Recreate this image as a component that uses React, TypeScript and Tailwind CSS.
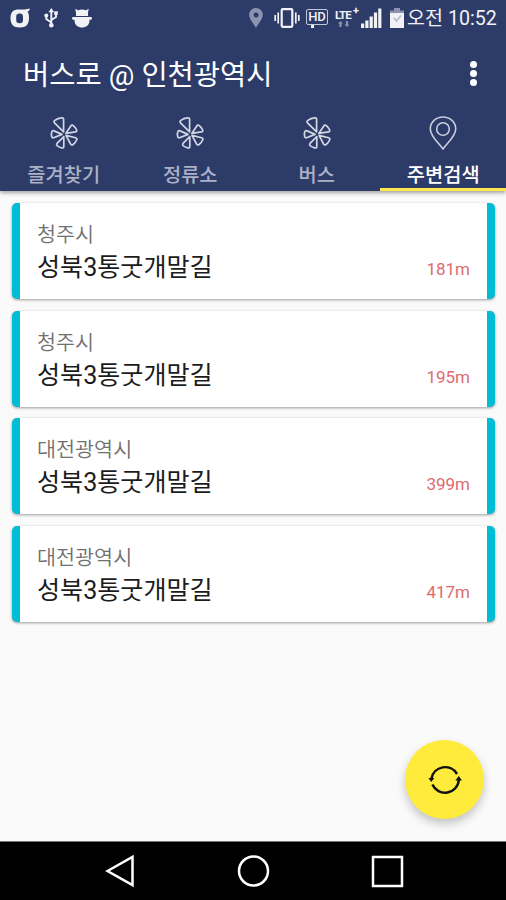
import type { ReactNode } from "react";
import clsx from "clsx";

interface Stop {
  id: number;
  city: string;
  name: string;
  distance: string;
}

interface Tab {
  label: string;
  icon: ReactNode;
}

const stops: Stop[] = [
  { id: 1, city: "청주시", name: "성북3통굿개말길", distance: "181m" },
  { id: 2, city: "청주시", name: "성북3통굿개말길", distance: "195m" },
  { id: 3, city: "대전광역시", name: "성북3통굿개말길", distance: "399m" },
  { id: 4, city: "대전광역시", name: "성북3통굿개말길", distance: "417m" },
];

function FanIcon() {
  return (
    <svg width="30" height="36" viewBox="0 0 30 36" fill="none" stroke="currentColor" strokeWidth="1.7" strokeLinejoin="round">
      <path d="M14.6 16.8V4.2C14.6 3 13.6 2.6 12.4 2.9C9.6 3.2 7.6 4.2 5.8 5.4C4.8 6 4.9 7 5.5 7.8Z" />
      <path d="M13 19.4L4.6 22.7C3.6 23 2.7 22.4 2.6 21.2C2.3 19.6 2.3 18 2.8 16.8C3.2 15.6 4 15.5 5 15.9Z" />
      <path d="M14.8 21.6V31.6C14.8 32.8 14 33.2 12.8 32.9C11 32.5 9.6 31.8 8.3 30.9C7.4 30.2 7.4 29.3 8 28.4Z" />
      <path d="M17 20.4L26.6 22.8C27.8 23.1 28.2 23.8 27.6 25C26.8 26.9 25.5 28.5 24.1 29.5C23.2 30.1 22.3 29.9 21.6 29Z" />
      <path d="M16.8 18.4L21.8 11C22.5 10 23.5 10 24.3 10.6C25.8 11.8 27 13.2 27.7 15C28 16 27.4 16.7 26.4 16.9Z" />
    </svg>
  );
}

function PlaceIcon() {
  return (
    <svg width="30" height="36" viewBox="0 0 30 36" fill="none" stroke="currentColor" strokeWidth="1.6" strokeLinejoin="round">
      <path d="M15 34C11.5 28.5 2.3 21.5 2.3 13.9C2.3 7.2 8 2 15 2S27.7 7.2 27.7 13.9C27.7 21.5 18.5 28.5 15 34Z" />
      <circle cx="15" cy="14" r="6.3" />
    </svg>
  );
}

const tabs: Tab[] = [
  { label: "즐겨찾기", icon: <FanIcon /> },
  { label: "정류소", icon: <FanIcon /> },
  { label: "버스", icon: <FanIcon /> },
  { label: "주변검색", icon: <PlaceIcon /> },
];

function StatusBar() {
  return (
    <div className="flex h-[35px] items-center justify-between pl-2.5 pr-[9px] text-[#f1f2f6]">
      <div className="flex items-center">
        <svg width="21" height="20" viewBox="0 0 21 20">
          <path d="M20 .5C19.6 2.2 18.8 3.2 17.5 3.7C18.6 5.1 19 6.8 19 9.5C19 16.5 16.2 19.5 9.8 19.5C3.3 19.5 .5 16.5 .5 10C.5 4 3.2 1.5 9 1.5C13 1.5 16.5 1.5 20 .5Z" fill="currentColor" />
          <rect x="6.200" y="5.5" width="6.800" height="9.800" rx="3.2" fill="#2d3b69" />
        </svg>
        <svg className="ml-[13px]" width="14" height="20" viewBox="0 0 14 20" fill="none" stroke="currentColor" strokeWidth="1.9">
          <path d="M7.3 3V16M7.3 14.5L2.3 11V8M7.3 12L12 9V5" />
          <path d="M7.3 0L10.2 4.2H4.4Z" fill="currentColor" stroke="none" />
          <circle cx="2.3" cy="7.5" r="2" fill="currentColor" stroke="none" />
          <rect x="10.2" y="3.3" width="3.6" height="3.6" fill="currentColor" stroke="none" />
          <circle cx="7.3" cy="17.3" r="2.3" fill="currentColor" stroke="none" />
        </svg>
        <svg className="ml-[14px]" width="20" height="20" viewBox="0 0 20 20" fill="currentColor">
          <path d="M4 8V4.5L3.2 .8L6 2.2Q10 .9 14 2.2L16.8 .8L16 4.5V8Z" />
          <rect x="0" y="9" width="20" height="2.8" rx="1.4" />
          <path d="M2.5 10H17.5V12.5C17.5 17 14 19.5 10 19.5S2.5 17 2.5 12.5Z" />
        </svg>
      </div>

      <div className="flex items-center">
        <svg width="14" height="20" viewBox="0 0 14 20" fill="#8b93b0">
          <path fillRule="evenodd" d="M7 0C3 0 .2 3 .2 6.8C.2 11.5 4.5 15 7 20C9.5 15 13.8 11.5 13.8 6.8C13.8 3 11 0 7 0ZM7 4.5A2.5 2.5 0 1 1 7 9.5A2.5 2.5 0 0 1 7 4.5Z" />
        </svg>
        <svg className="ml-[11px]" width="26" height="20" viewBox="0 0 26 20" fill="none" stroke="currentColor" strokeWidth="1.7">
          <rect x="7.7" y="1.2" width="10.6" height="17.6" rx="1" strokeWidth="2.2" />
          <path d="M4.2 4.5V15.5M1.2 7V13M21.8 4.5V15.5M24.8 7V13" />
        </svg>
        <div className="relative ml-[6px] mt-[-2px] flex h-[16px] w-[22px] items-center justify-center rounded-[2px] border-[1.5px] border-[#c3c8d7] font-[Roboto] text-[13px] font-medium leading-none">
          HD
          <span className="absolute -bottom-[4px] left-[4px] h-[3px] w-[3px] bg-current" />
        </div>
        <div className="relative ml-[7px] h-[20px] w-[25px] font-[Roboto] font-bold">
          <span className="absolute left-0 top-[2px] text-[11.5px] leading-[11px] tracking-[-0.9px]">LTE</span>
          <span className="absolute right-[1px] top-[-2px] text-[11px] leading-[10px]">+</span>
          <svg className="absolute left-[3px] top-[13px]" width="12" height="6" viewBox="0 0 12 6" fill="#8b93b0">
            <path d="M2.5 0L5 2.5H3.6V6H1.4V2.5H0ZM9 6L6.5 3.5H7.9V0H10.1V3.5H11.5Z" />
          </svg>
        </div>
        <svg className="ml-px" width="21" height="20" viewBox="0 0 21 20" fill="currentColor">
          <path d="M0 15.5H3.2V20H0ZM4.3 12.5H7.5V20H4.3ZM8.6 8.5H11.8V20H8.6ZM12.9 4.5H16.1V20H12.9ZM17.2 .5H20.4V20H17.2Z" />
        </svg>
        <svg className="ml-[8px]" width="14" height="20" viewBox="0 0 14 20">
          <path d="M4 0H10V2.5H14V5H0V2.5H4Z" fill="#8b93b0" />
          <path d="M0 5H14V20H0Z" fill="currentColor" />
          <path d="M4 10L6.5 13L11 7.5" fill="none" stroke="#b4b9cb" strokeWidth="1.5" />
        </svg>
        <span className="ml-[3px] w-[90px] whitespace-nowrap pt-[3px] text-[19.6px] leading-9">오전 10:52</span>
      </div>
    </div>
  );
}

function StopCard({ stop }: { stop: Stop }) {
  return (
    <li className="flex h-24 items-end justify-between rounded-[5px] border-x-8 border-[#00bcd4] bg-white px-[17px] shadow-[0_1px_3px_rgba(0,0,0,0.38)]">
      <div className="pb-[14px]">
        <p className="text-[20.7px] font-[350] leading-[31px] text-[#707070]">{stop.city}</p>
        <p className="text-[25.1px] leading-[34px] text-[#1c1c1c]">{stop.name}</p>
      </div>
      <span className="pb-[18px] text-[17px] leading-6 text-[#de6a6f]">{stop.distance}</span>
    </li>
  );
}

export default function App() {
  return (
    <div className="relative flex h-[900px] w-[506px] flex-col overflow-hidden bg-[#fafafa] font-['Roboto','Noto_Sans_CJK_KR',sans-serif]">
      <header className="h-[191px] shrink-0 bg-[#2d3b69] shadow-[0_2px_4px_rgba(0,0,0,0.35)]">
        <StatusBar />
        <div className="flex h-[77px] items-center justify-between pl-[23px] pr-[29px]">
          <h1 className="whitespace-nowrap pt-[5px] text-[28.5px] leading-none text-white">버스로 @ 인천광역시</h1>
          <button className="flex flex-col gap-[2px]" aria-label="menu">
            <span className="size-[7px] rounded-full bg-white" />
            <span className="size-[7px] rounded-full bg-white" />
            <span className="size-[7px] rounded-full bg-white" />
          </button>
        </div>
        <nav className="grid h-[79px] grid-cols-4">
          {tabs.map((tab, i) => (
            <button
              key={tab.label}
              className={clsx(
                "flex h-[79px] flex-col items-center border-b-[3px] pt-[3px]",
                i === 3 ? "border-[#ffe74c] text-white" : "border-transparent text-[#abb1c6]"
              )}
            >
              <span className={clsx("flex pl-px", i === 3 ? "text-[#c9cedd]" : "text-[#d3d7e3]")}>{tab.icon}</span>
              <span className="mt-[10px] whitespace-nowrap pl-px text-[19.8px] font-medium leading-[30px]">{tab.label}</span>
            </button>
          ))}
        </nav>
      </header>

      <main className="flex-1 pl-3 pr-[11px] pt-3">
        <ul className="flex flex-col gap-[11.6px]">
          {stops.map((stop) => (
            <StopCard key={stop.id} stop={stop} />
          ))}
        </ul>
      </main>

      <button
        className="absolute bottom-[81px] right-[22px] flex size-[79px] items-center justify-center rounded-full bg-[#ffeb3b] shadow-[0_5px_10px_rgba(0,0,0,0.22)]"
        aria-label="refresh"
      >
        <svg width="34" height="32" viewBox="0 0 34 32" fill="none" stroke="#111" strokeWidth="2.5">
          <path d="M3.5 14.5A13.8 13.8 0 0 1 29 10" />
          <path d="M30.8 16A13.8 13.8 0 0 1 4.4 20.5" />
          <path d="M.5 14H6.500L3.2 18ZM27.300 16.500H34L30.800 12Z" fill="#111" stroke="none" />
        </svg>
      </button>

      <footer className="h-[59px] shrink-0 border-t border-[#777] bg-black">
        <svg className="mx-auto" width="506" height="58" viewBox="0 0 506 58" fill="none" stroke="#fff" strokeWidth="2.5">
          <path d="M107.5 29L132.5 14.8V43.2Z" />
          <circle cx="253.5" cy="29" r="14.5" />
          <rect x="373" y="15" width="29" height="29" />
        </svg>
      </footer>
    </div>
  );
}
